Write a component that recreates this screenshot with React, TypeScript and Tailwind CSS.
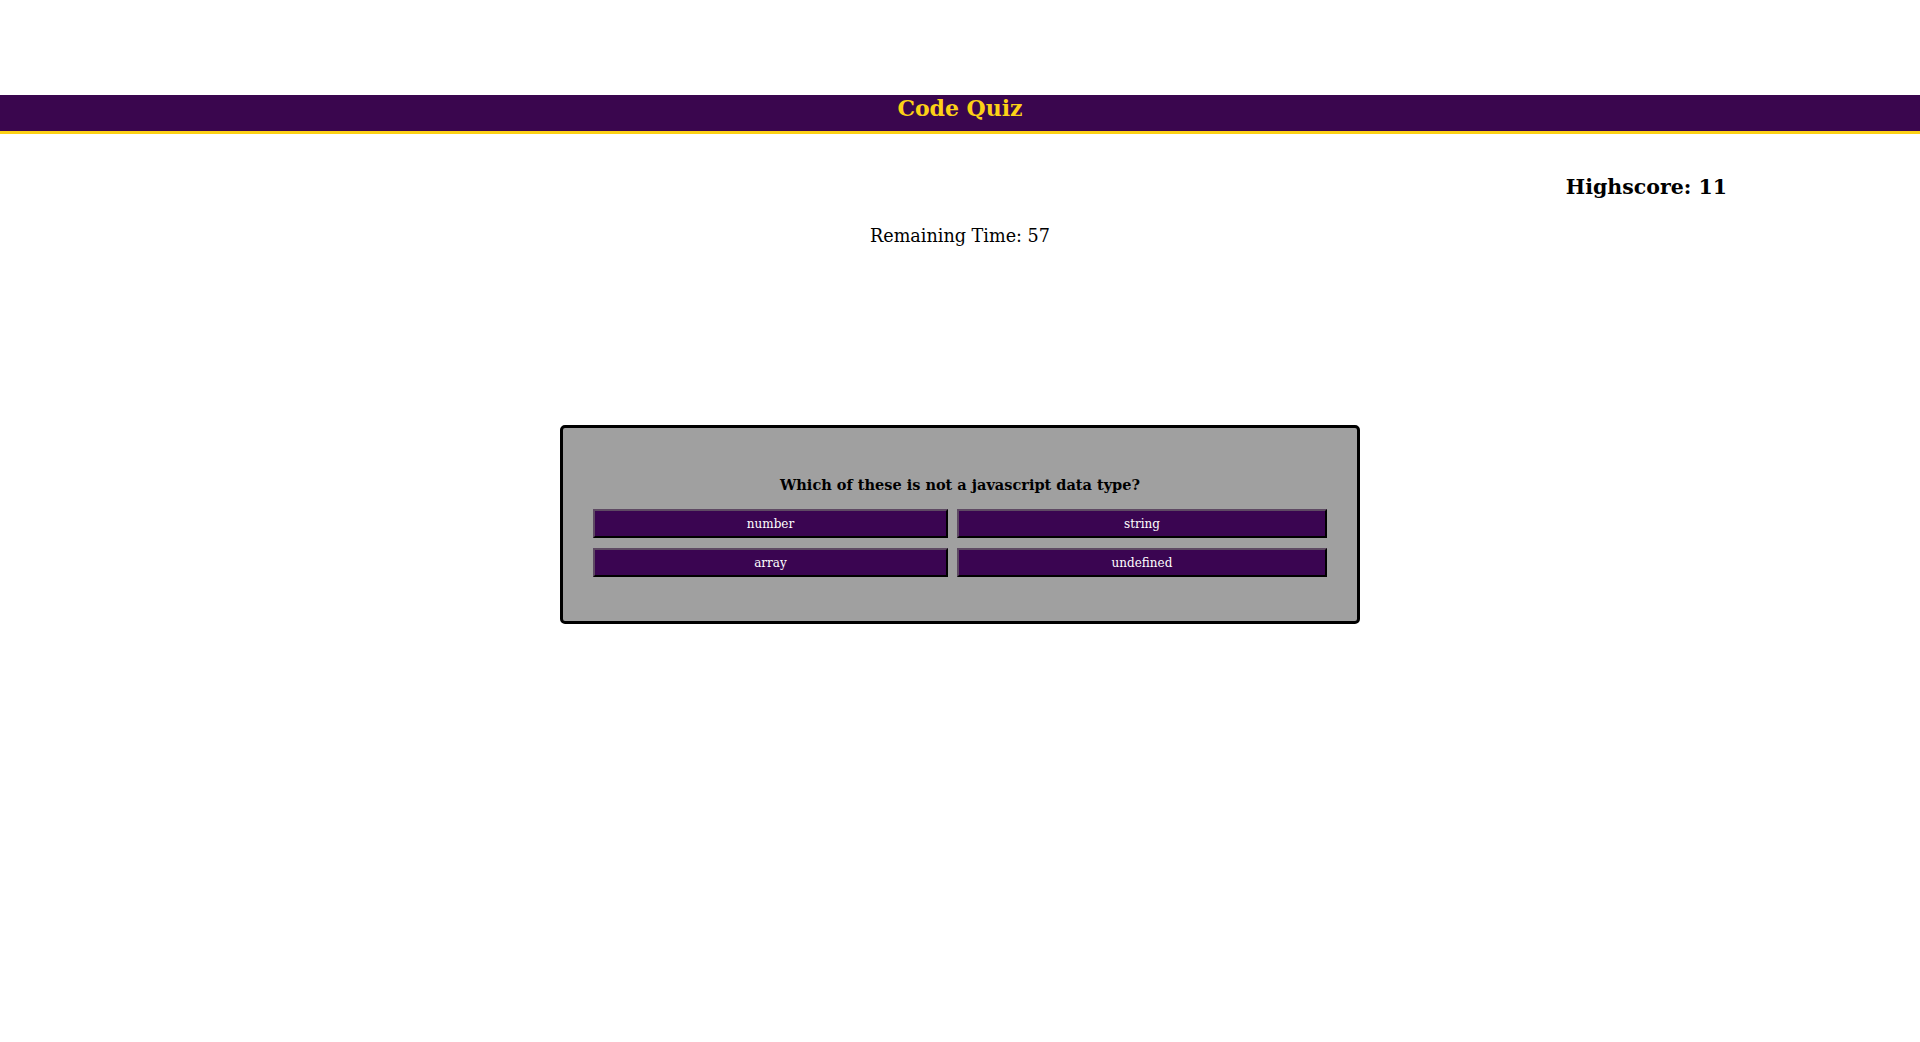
const ANSWERS = ['number', 'string', 'array', 'undefined'];

export default function App() {
  return (
    <div className="min-h-screen bg-white text-black pt-[95px] font-['DejaVu_Serif',serif]">
      <header className="h-[39px] bg-[#3a064e] border-b-[3px] border-[#fcd116] flex justify-center">
        <h1 className="text-[22px] leading-[27px] font-bold text-[#fcd116]">Code Quiz</h1>
      </header>

      <div className="flex justify-end pr-[193px] pt-[39px]">
        <h2 className="text-[20.5px] leading-[28px] font-bold">Highscore: 11</h2>
      </div>

      <p className="text-center text-[17.6px] leading-[28px] mt-[21px]">Remaining Time: 57</p>

      <div className="flex justify-center mt-[175px]">
        <div className="w-[800px] h-[199px] bg-[#a0a0a0] border-[3px] border-black rounded-[5px] pt-[47px] pl-[30px]">
          <p className="text-center text-[14.5px] leading-[20px] font-bold pr-[30px]">
            Which of these is not a javascript data type?
          </p>
          <div className="grid grid-cols-[355px_370px] gap-x-[9px] gap-y-[10px] mt-[14px]">
            {ANSWERS.map(a => (
              <button
                key={a}
                className="h-[29px] bg-[#3a0551] text-white text-[12px] border-2 border-t-[#5e4a63] border-l-[#5e4a63] border-b-black border-r-black"
              >
                {a}
              </button>
            ))}
          </div>
        </div>
      </div>
    </div>
  );
}
